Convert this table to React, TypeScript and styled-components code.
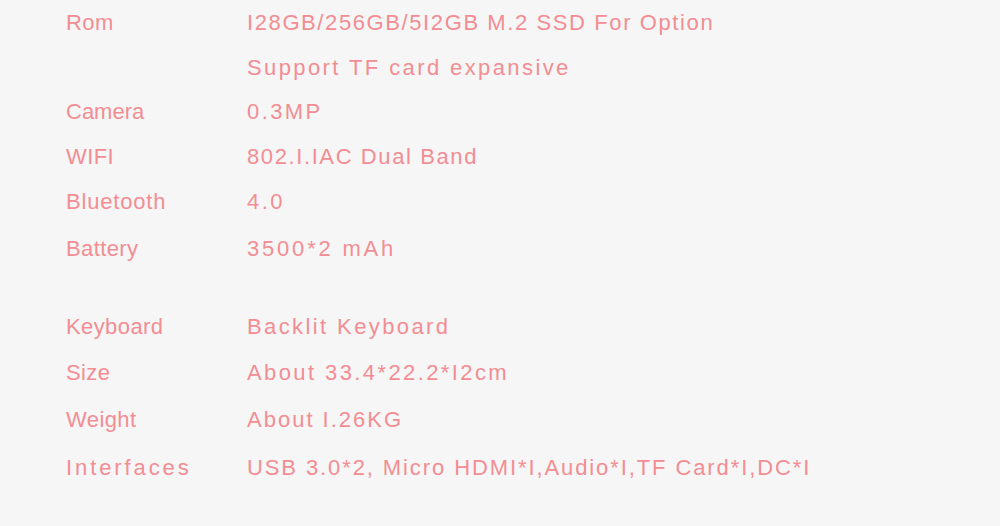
import styled, { createGlobalStyle } from 'styled-components';

const GlobalStyle = createGlobalStyle`
	html, body {
		margin: 0;
		padding: 0;
		background: #f6f6f6;
	}
`;

const PINK = '#f38d93';

const Page = styled.div`
	width: 1000px;
	height: 526px;
	background: #f6f6f6;
	padding-left: 66px;
	box-sizing: border-box;
	overflow: hidden;
	font-family: 'Liberation Sans', Arial, sans-serif;
	color: ${PINK};
`;

const SpecGroup = styled.div<{ $gap?: number }>`
	display: flex;
	flex-direction: column;
	margin-top: ${(p) => p.$gap ?? 0}px;
`;

const SpecRow = styled.div<{ $h?: number }>`
	display: grid;
	grid-template-columns: 181px 1fr;
	align-items: center;
	height: ${(p) => p.$h ?? 45}px;
`;

const Label = styled.span<{ $ls?: number }>`
	font-size: 22px;
	letter-spacing: ${(p) => p.$ls ?? 0.4}px;
	white-space: nowrap;
`;

const Value = styled.span<{ $ls?: number }>`
	font-size: 22px;
	letter-spacing: ${(p) => p.$ls ?? 2.4}px;
	white-space: nowrap;
`;

type Spec = { label: string; value: string; h?: number; labelLs?: number; valueLs?: number };

const firstGroup: Spec[] = [
	{ label: 'Rom', value: 'I28GB/256GB/5I2GB M.2 SSD For Option', valueLs: 1.6 },
	{ label: '', value: 'Support TF card expansive' },
	{ label: 'Camera', value: '0.3MP', h: 44, labelLs: 0 },
	{ label: 'WIFI', value: '802.I.IAC Dual Band', h: 45, valueLs: 1.6 },
	{ label: 'Bluetooth', value: '4.0', h: 46, labelLs: 0.8 },
	{ label: 'Battery', value: '3500*2 mAh', h: 47, valueLs: 2.8 },
];

const secondGroup: Spec[] = [
	{ label: 'Keyboard', value: 'Backlit Keyboard', h: 46 },
	{ label: 'Size', value: 'About 33.4*22.2*I2cm', h: 46 },
	{ label: 'Weight', value: 'About I.26KG', h: 47, valueLs: 2 },
	{
		label: 'Interfaces',
		value: 'USB 3.0*2, Micro HDMI*I,Audio*I,TF Card*I,DC*I',
		h: 50,
		labelLs: 2.9,
		valueLs: 1.9,
	},
];

const renderRows = (rows: Spec[]) =>
	rows.map((row, i) => (
		<SpecRow key={i} $h={row.h}>
			<Label $ls={row.labelLs}>{row.label}</Label>
			<Value $ls={row.valueLs}>{row.value}</Value>
		</SpecRow>
	));

export default function App() {
	return (
		<>
			<GlobalStyle />
			<Page>
				<SpecGroup>{renderRows(firstGroup)}</SpecGroup>
				<SpecGroup $gap={32}>{renderRows(secondGroup)}</SpecGroup>
			</Page>
		</>
	);
}
